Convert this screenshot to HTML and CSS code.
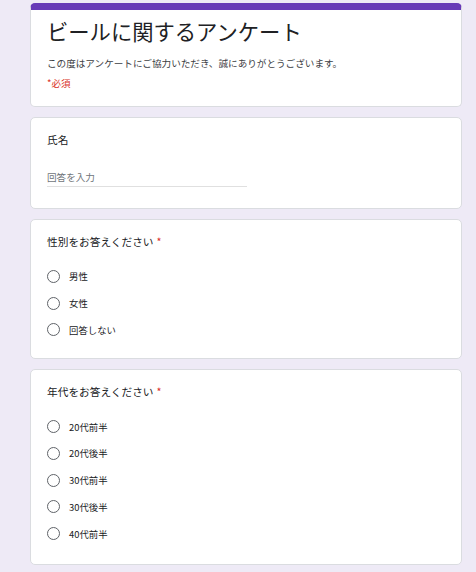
FILE: index.html
```html
<!DOCTYPE html>
<html lang="ja">
<head>
<meta charset="utf-8">
<title>ビールに関するアンケート</title>
<link rel="stylesheet" href="styles.css">
</head>
<body>
<main class="form">
  <section class="card card-head">
    <h1 class="form-title">ビールに関するアンケート</h1>
    <p class="form-desc">この度はアンケートにご協力いただき、誠にありがとうございます。</p>
    <p class="required-note">*必須</p>
  </section>

  <section class="card card-text">
    <h2 class="q-title">氏名</h2>
    <div class="text-answer">回答を入力</div>
  </section>

  <section class="card">
    <h2 class="q-title">性別をお答えください<span class="star">*</span></h2>
    <ul class="options">
      <li class="option"><span class="radio"></span><span class="opt-label">男性</span></li>
      <li class="option"><span class="radio"></span><span class="opt-label">女性</span></li>
      <li class="option"><span class="radio"></span><span class="opt-label">回答しない</span></li>
    </ul>
  </section>

  <section class="card card-last">
    <h2 class="q-title">年代をお答えください<span class="star">*</span></h2>
    <ul class="options">
      <li class="option"><span class="radio"></span><span class="opt-label">20代前半</span></li>
      <li class="option"><span class="radio"></span><span class="opt-label">20代後半</span></li>
      <li class="option"><span class="radio"></span><span class="opt-label">30代前半</span></li>
      <li class="option"><span class="radio"></span><span class="opt-label">30代後半</span></li>
      <li class="option"><span class="radio"></span><span class="opt-label">40代前半</span></li>
    </ul>
  </section>
</main>
</body>
</html>
```

FILE: styles.css
```css
html, body {
  margin: 0;
  padding: 0;
  background: #eeeaf6;
}

body {
  font-family: "Noto Sans CJK JP", "Noto Sans", sans-serif;
  color: #202124;
}

.form {
  width: 432px;
  margin-left: 30px;
  padding-top: 3px;
  display: flex;
  flex-direction: column;
  gap: 10px;
}

.card {
  background: #ffffff;
  border: 1px solid #dadce0;
  border-radius: 5px;
  padding: 14px 16px 15px 16px;
}

.card-head {
  border-top: 7px solid #673ab7;
  padding-top: 7px;
  padding-bottom: 16px;
}

.card-text {
  padding-bottom: 21px;
}

.card-last {
  padding-bottom: 17px;
}

.form-title {
  margin: 0;
  font-size: 21.3px;
  line-height: 28px;
  font-weight: 400;
  color: #202124;
}

.form-desc {
  margin: 11px 0 0 0;
  font-size: 9.6px;
  line-height: 14px;
  color: #3c4043;
}

.required-note {
  margin: 6px 0 0 0;
  font-size: 9.5px;
  line-height: 14px;
  color: #d93025;
}

.q-title {
  margin: 0;
  font-size: 10.7px;
  line-height: 16px;
  font-weight: 400;
  color: #202124;
}

.star {
  color: #d93025;
  margin-left: 3px;
}

.text-answer {
  margin-top: 22px;
  width: 200px;
  font-size: 9.6px;
  line-height: 14px;
  color: #70757a;
  padding-bottom: 2px;
  border-bottom: 1px solid #e0e0e0;
}

.options {
  list-style: none;
  margin: 13px 0 0 0;
  padding: 0;
}

.option {
  height: 26.75px;
  display: flex;
  align-items: center;
  gap: 9px;
}

.radio {
  width: 13px;
  height: 13px;
  box-sizing: border-box;
  border: 1.4px solid #5f6368;
  border-radius: 50%;
  flex: none;
}

.opt-label {
  font-size: 9.4px;
  line-height: 14px;
  color: #202124;
}
```
